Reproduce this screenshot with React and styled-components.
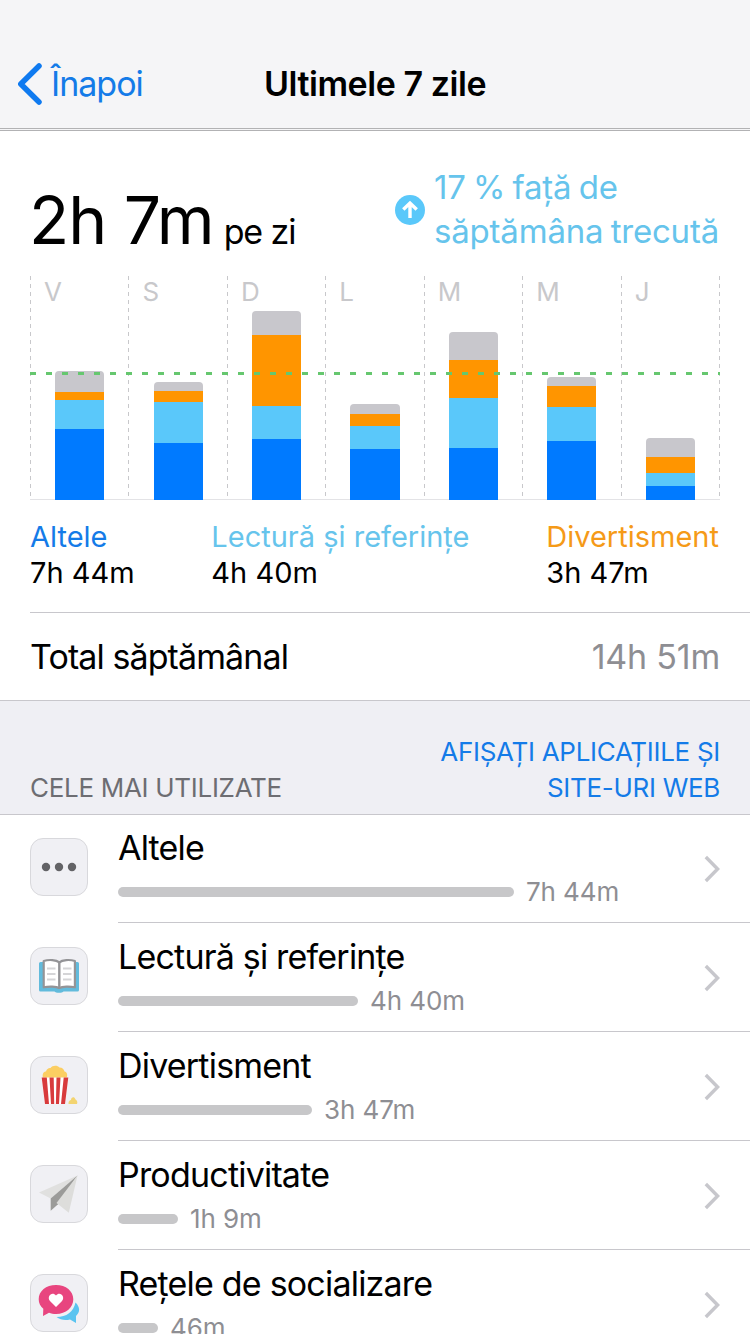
import React from 'react';
import styled, { createGlobalStyle } from 'styled-components';

const GlobalStyle = createGlobalStyle`
  * {
    box-sizing: border-box;
  }
  body {
    margin: 0;
    background: #fff;
    color: #000;
    font-family: Inter, 'Liberation Sans', sans-serif;
    font-feature-settings: 'calt' 0;
  }
`;

const Screen = styled.div`
  width: 750px;
  height: 1334px;
  overflow: hidden;
  background: #fff;
`;

const NavBar = styled.header`
  display: grid;
  grid-template-columns: 1fr auto 1fr;
  align-items: center;
  height: 131px;
  padding: 40px 16px 0;
  background: #f5f5f7;
  border-bottom: 3px double #b2b2b4;
`;
const BackButton = styled.a`
  display: flex;
  align-items: center;
  gap: 8px;
  color: #147be8;
  font-size: 34px;
  line-height: 44px;
  letter-spacing: -1px;
`;
const NavTitle = styled.h1`
  margin: 0;
  font-size: 34px;
  font-weight: 600;
  line-height: 44px;
  letter-spacing: -0.45px;
`;

const Overview = styled.section`
  padding: 34px 30px 0;
`;
const Summary = styled.div`
  display: flex;
  justify-content: space-between;
  height: 88px;
`;
const Average = styled.div`
  margin-left: -1px;
  padding-top: 22px;
  font-size: 66px;
  line-height: 66px;
  letter-spacing: -1px;
  white-space: nowrap;
  small {
    margin-left: 10px;
    font-size: 34px;
    letter-spacing: -1.1px;
  }
`;
const Trend = styled.div`
  display: flex;
  align-items: center;
  gap: 9px;
  color: #66c4ec;
  font-size: 33px;
  line-height: 44px;
  letter-spacing: -0.2px;
  word-spacing: -1.8px;
  white-space: nowrap;
  margin-right: 1px;
  svg {
    margin-top: 2px;
  }
`;

const Chart = styled.div`
  position: relative;
  display: flex;
  width: 690px;
  height: 224px;
  margin-top: 23px;
  border-bottom: 1px solid #e3e3e6;
  &::after {
    content: '';
    width: 1px;
    background: repeating-linear-gradient(#c8c8cb 0 4px, transparent 4px 8px);
  }
`;
const Day = styled.div`
  position: relative;
  flex: none;
  width: 98.45px;
  height: 223px;
  padding-left: 14px;
  background: repeating-linear-gradient(#c8c8cb 0 4px, transparent 4px 8px) 0 0 / 1px 100% no-repeat;
  color: #c8c8cb;
  font-size: 26px;
  line-height: 32px;
`;
const Stack = styled.div`
  position: absolute;
  left: 25.1px;
  bottom: -1px;
  width: 49.2px;
  border-radius: 4px 4px 0 0;
  overflow: hidden;
`;
const Segment = styled.div`
  height: ${props => props.$size}px;
  background: ${props => props.$color};
`;
const AverageLine = styled.div`
  position: absolute;
  left: 0;
  top: 96px;
  width: 100%;
  height: 3px;
  background: repeating-linear-gradient(90deg, #66c76f 0 6px, transparent 6px 16px);
`;

const Legend = styled.div`
  display: flex;
  justify-content: space-between;
  margin-top: 19px;
  padding-right: 1px;
  font-size: 29px;
  line-height: 36px;
`;
const LegendItem = styled.div`
  span {
    display: block;
    color: ${props => props.$color};
  }
`;

const Total = styled.div`
  display: flex;
  justify-content: space-between;
  height: 88px;
  margin: 21px 0 0 30px;
  padding-right: 30px;
  border-top: 1px solid #c8c7cc;
  font-size: 34px;
  line-height: 88px;
  letter-spacing: -0.9px;
  span:last-child {
    color: #8e8e93;
    letter-spacing: -0.2px;
  }
`;

const SectionHeader = styled.div`
  position: relative;
  display: flex;
  justify-content: space-between;
  align-items: flex-end;
  height: 115px;
  margin-bottom: -1px;
  padding: 0 30px 8px;
  background: #efeff4;
  border: solid #c8c7cc;
  border-width: 1px 0;
  color: #6d6d72;
  font-size: 26px;
  line-height: 36px;
  letter-spacing: -0.3px;
`;
const Toggle = styled.a`
  color: #147be8;
  text-align: right;
`;

const Row = styled.div`
  display: flex;
  height: 109px;
  padding-left: 30px;
`;
const IconTile = styled.div`
  flex: none;
  width: 58px;
  height: 58px;
  margin: 24px 30px 0 0;
  background: #f0f0f4;
  border: 1px solid #d8d8dc;
  border-radius: 13px;
  svg {
    display: block;
    margin: -1px;
  }
`;
const RowBody = styled.div`
  flex: 1;
  display: flex;
  justify-content: space-between;
  align-items: center;
  padding-right: 30px;
  border-bottom: 1px solid #c8c7cc;
  > svg {
    margin-top: 2px;
  }
`;
const RowTitle = styled.div`
  font-size: 34px;
  line-height: 40px;
  letter-spacing: -0.8px;
`;
const Usage = styled.div`
  display: flex;
  align-items: center;
  gap: 12px;
  margin-top: 8px;
  color: #8e8e93;
  font-size: 26px;
  line-height: 32px;
  letter-spacing: -0.1px;
`;
const Meter = styled.div`
  width: ${props => props.$size}px;
  height: 10px;
  border-radius: 5px;
  background: #c7c7c9;
`;

const grey = '#c8c7cc';
const orange = '#ff9500';
const sky = '#5ac8fa';
const blue = '#007aff';

// segment heights, top to bottom: rest, entertainment, reading, other
const days = [
  { name: 'V', parts: [21, 8, 29, 71] },
  { name: 'S', parts: [9, 11, 41, 57] },
  { name: 'D', parts: [24, 71, 33, 61] },
  { name: 'L', parts: [10, 12, 23, 51] },
  { name: 'M', parts: [28, 38, 50, 52] },
  { name: 'M', parts: [9, 21, 34, 59] },
  { name: 'J', parts: [19, 16, 13, 14] },
];
const colors = [grey, orange, sky, blue];

const DotsIcon = () => (
  <svg width="58" height="58" viewBox="0 0 58 58" fill="#636366">
    <circle cx="16" cy="29" r="4.2" />
    <circle cx="29" cy="29" r="4.2" />
    <circle cx="42" cy="29" r="4.2" />
  </svg>
);

const BookIcon = () => (
  <svg width="58" height="58" viewBox="0 0 58 58">
    <path
      d="M10.5 15h37a1.5 1.5 0 0 1 1.5 1.5V43a1.5 1.5 0 0 1-1.5 1.5H33.500c-1 1.700-8 1.700-9 0h-14A1.500 1.500 0 0 1 9 43V16.500a1.500 1.500 0 0 1 1.500-1.500z"
      fill="#62bbdc"
    />
    <path
      d="M29.300 15.300c-3-2.500-10.500-3-15.600-1.300v26.300c5-1.200 12.600-1 15.600.7 3-1.700 10.600-1.900 15.600-.7V14c-5.100-1.700-12.600-1.200-15.600 1.300z"
      fill="#fff"
      stroke="#949497"
      strokeWidth="2.2"
      strokeLinejoin="round"
    />
    <path d="M29.300 15.300v26" stroke="#949497" strokeWidth="2.4" />
    <path
      d="M17 21.500h8.500M17 27h8.500M17 32.500h8.500M33 21.500h8.500M33 27h8.500M33 32.500h8.500"
      stroke="#d5d5d7"
      strokeWidth="1.8"
    />
  </svg>
);

const PopcornIcon = () => (
  <svg width="58" height="58" viewBox="0 0 58 58">
    <path
      d="M13 22c-1-4 .5-6.500 3-6.500.5-2.500 3-4 4.500-3.500 2-3 7-3 9-.5 3 0 4.500 2 5 4 2.500.5 3.500 3.500 2 6.500z"
      fill="#fbce62"
    />
    <path d="M11.700 21.500h26.600L35 48H15z" fill="#fff" />
    <path
      d="M11.700 21.500h5.100L19 48h-4zM19.500 21.500h4.200L24.200 48h-3.200zM26.500 21.500h4L29 48h-3.100zM33.700 21.500h4.600L35 48h-4z"
      fill="#d83a3c"
    />
    <path d="M38.500 48c-.3-3 1.500-4 2.500-4 0-3 3.500-3.800 4.300-.8 2 .8 2.500 3.300 1.700 4.800z" fill="#f3d470" />
  </svg>
);

const PlaneIcon = () => (
  <svg width="58" height="58" viewBox="0 0 58 58">
    <path d="M47.500 10.500 9 27.500l11.700 6z" fill="#e0e0df" />
    <path d="M47.500 10.500 20.700 33.500v12.300l7.300-6.500z" fill="#9b9b99" />
    <path d="M47.500 10.500 26.500 38l12.300 9.800z" fill="#dddddb" />
  </svg>
);

const ChatIcon = () => (
  <svg width="58" height="58" viewBox="0 0 58 58">
    <path d="M45.500 28.500c5 5 4.500 10 .5 13.500V49l-6-3.500c-5 1.300-10 .3-13.500-2.500 10 0 17-5 19-14.500z" fill="#5ac4f0" />
    <path
      d="M26 11c10 0 17.300 6 17.300 14.300S36 40 26 40c-2.500 0-5-.4-7-1.200L13 42l.3-7.200C10.300 32.500 8.700 29 8.700 25.300 8.700 17 16 11 26 11z"
      fill="#e8457f"
    />
    <path d="M26 33l-5.800-5.800c-4.200-4.500 2-10.700 5.800-5.700 3.800-5 10 1.200 5.800 5.700z" fill="#fff" />
  </svg>
);

const Chevron = () => (
  <svg width="16" height="28" viewBox="0 0 16 28" fill="none" stroke="#c7c7cc" strokeWidth="3.4">
    <path d="M1.800 2 13.600 14 1.800 26" />
  </svg>
);

const apps = [
  { name: 'Altele', time: '7h 44m', size: 396, icon: <DotsIcon /> },
  { name: 'Lectură și referințe', time: '4h 40m', size: 240, icon: <BookIcon /> },
  { name: 'Divertisment', time: '3h 47m', size: 194, icon: <PopcornIcon /> },
  { name: 'Productivitate', time: '1h 9m', size: 60, icon: <PlaneIcon /> },
  { name: 'Rețele de socializare', time: '46m', size: 40, icon: <ChatIcon /> },
];

const App = () => {
  return (
    <Screen>
      <GlobalStyle />
      <NavBar>
        <BackButton>
          <svg
            width="27"
            height="44"
            viewBox="0 0 27 44"
            fill="none"
            stroke="#0f7af0"
            strokeWidth="5.5"
            strokeLinecap="round"
            strokeLinejoin="round"
          >
            <path d="M23 4 4.800 22 23 40" />
          </svg>
          Înapoi
        </BackButton>
        <NavTitle>Ultimele 7 zile</NavTitle>
      </NavBar>

      <Overview>
        <Summary>
          <Average>
            2h 7m<small>pe zi</small>
          </Average>
          <Trend>
            <svg width="30" height="30" viewBox="0 0 30 30">
              <circle cx="15" cy="15" r="15" fill={sky} />
              <path
                d="M15 23V8.500M8.300 14.500 15 8l6.700 6.500"
                fill="none"
                stroke="#fff"
                strokeWidth="3.4"
              />
            </svg>
            <div>
              17 % față de
              <br />
              săptămâna trecută
            </div>
          </Trend>
        </Summary>

        <Chart>
          {days.map((day, i) => (
            <Day key={i}>
              {day.name}
              <Stack>
                {day.parts.map((size, j) => (
                  <Segment key={j} $size={size} $color={colors[j]} />
                ))}
              </Stack>
            </Day>
          ))}
          <AverageLine />
        </Chart>

        <Legend>
          <LegendItem $color="#147be8">
            <span>Altele</span>7h 44m
          </LegendItem>
          <LegendItem $color="#66c4ec">
            <span>Lectură și referințe</span>4h 40m
          </LegendItem>
          <LegendItem $color="#f59a18">
            <span>Divertisment</span>3h 47m
          </LegendItem>
        </Legend>
      </Overview>

      <Total>
        <span>Total săptămânal</span>
        <span>14h 51m</span>
      </Total>

      <SectionHeader>
        <span>CELE MAI UTILIZATE</span>
        <Toggle>
          AFIȘAȚI APLICAȚIILE ȘI
          <br />
          SITE-URI WEB
        </Toggle>
      </SectionHeader>

      {apps.map(app => (
        <Row key={app.name}>
          <IconTile>{app.icon}</IconTile>
          <RowBody>
            <div>
              <RowTitle>{app.name}</RowTitle>
              <Usage>
                <Meter $size={app.size} />
                {app.time}
              </Usage>
            </div>
            <Chevron />
          </RowBody>
        </Row>
      ))}
    </Screen>
  );
};

export default App;
